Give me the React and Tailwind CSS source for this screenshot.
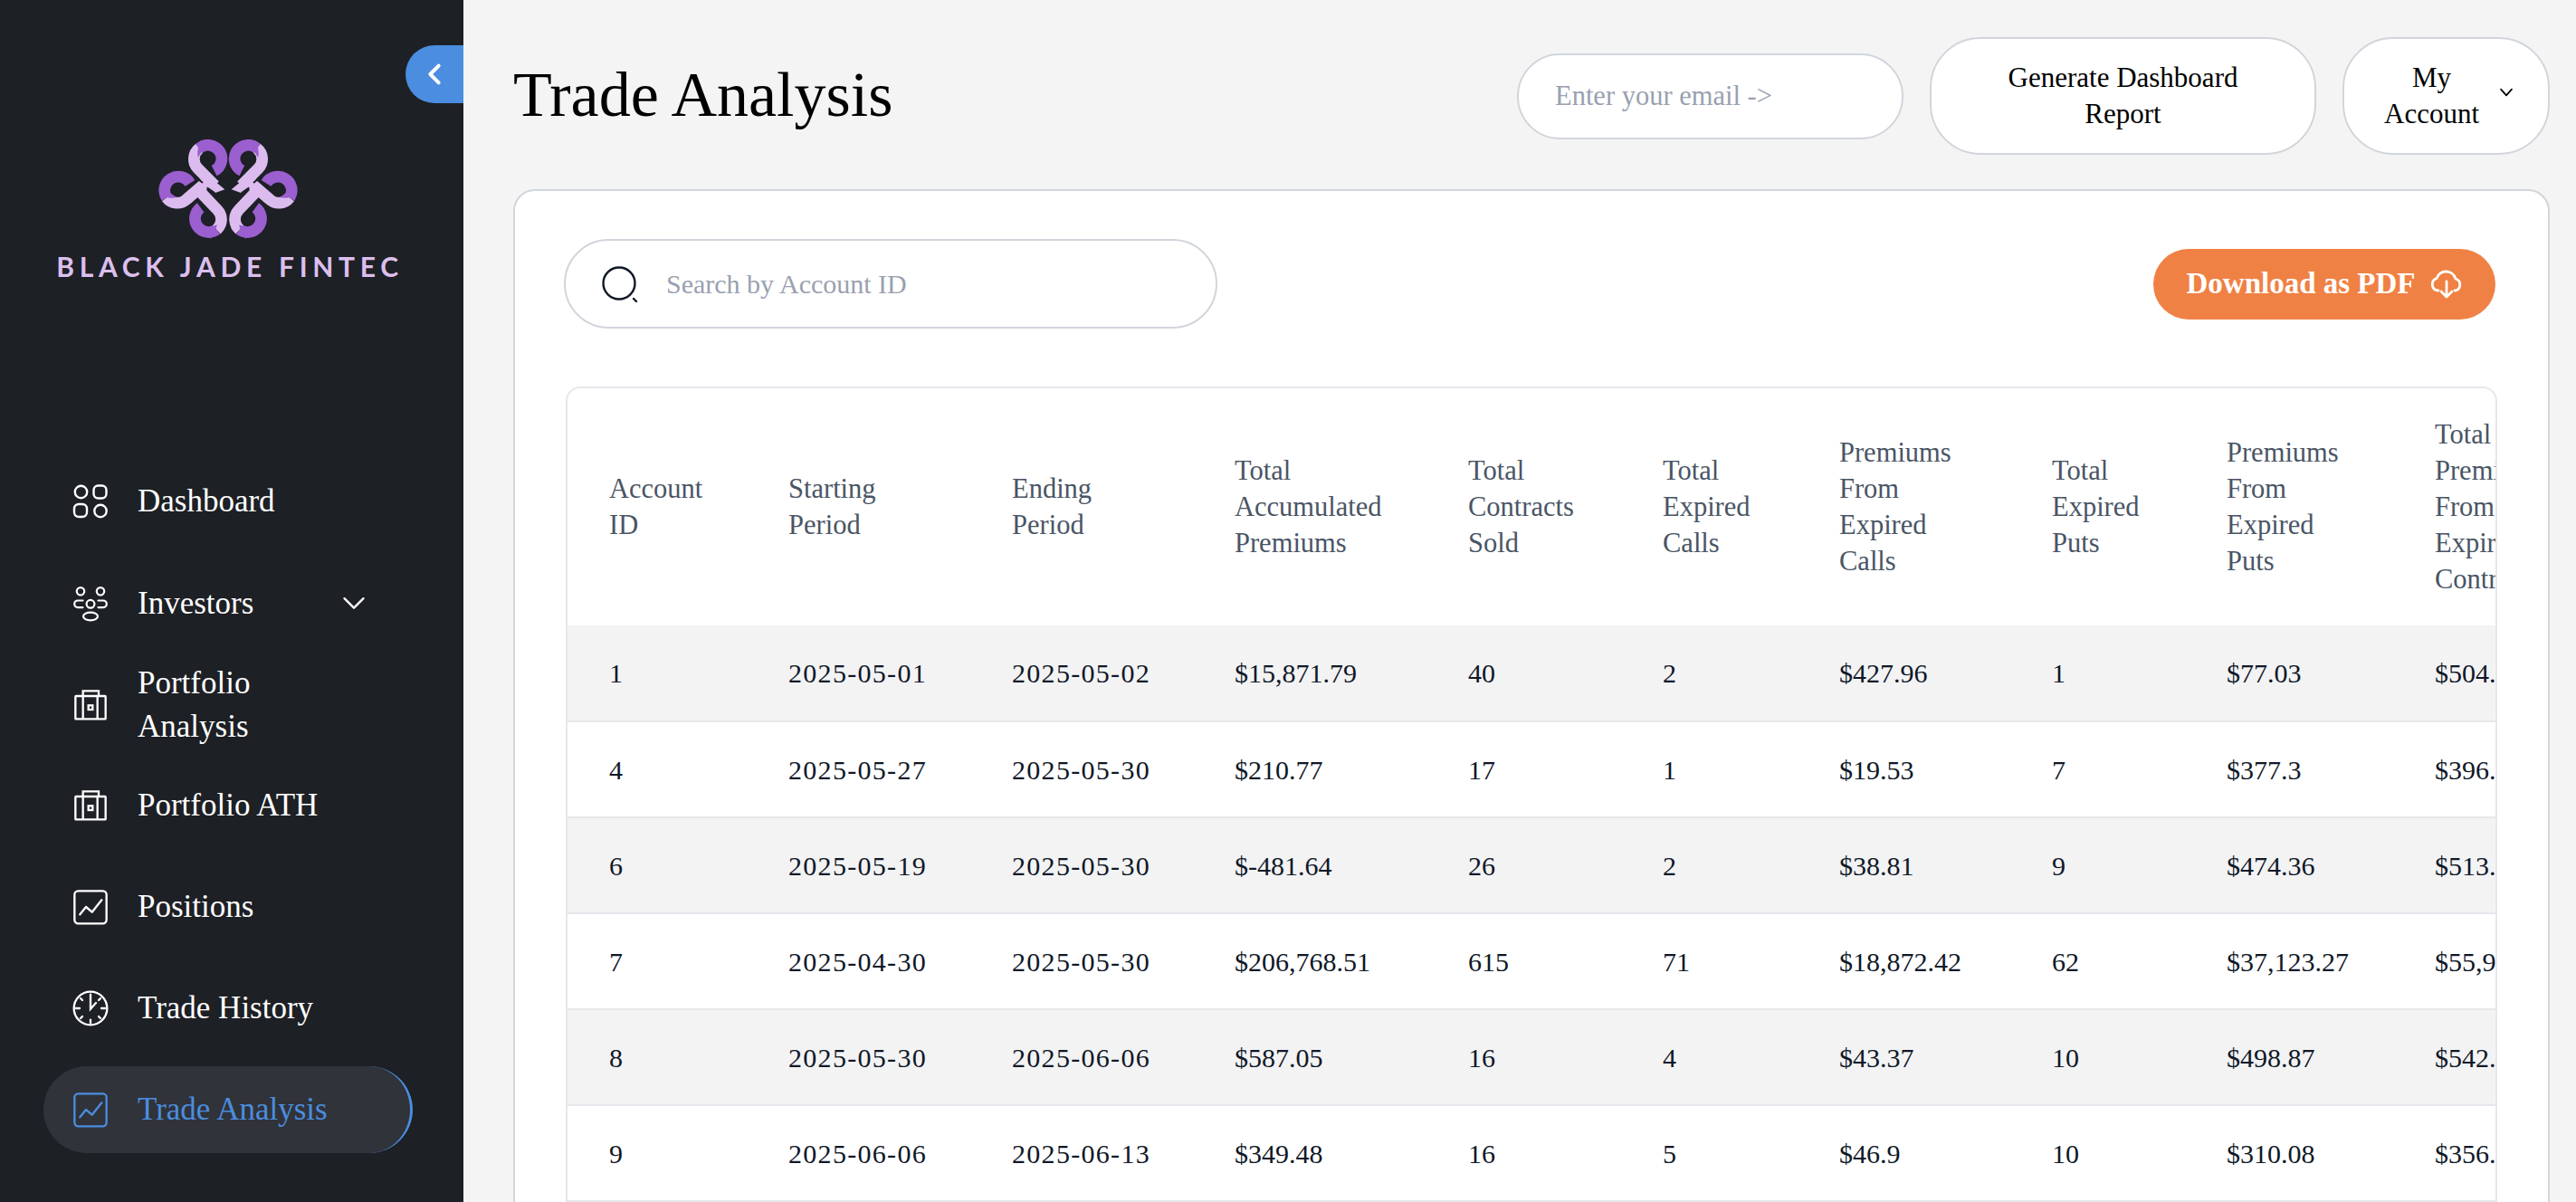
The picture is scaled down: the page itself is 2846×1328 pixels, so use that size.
const serif = { fontFamily: '"Liberation Serif", serif' };

function Logo() {
  const half = (
    <g fill="none">
      <path d="M630 607 A45 45 0 1 0 552 655" stroke="#9b5fd0" strokeWidth="38" />
      <path d="M552 655 A45 45 0 0 0 618 661 L684 604" stroke="#dcbcef" strokeWidth="38" />
      <path d="M526 636 Q545 662 585 655 L565 640 L548 620 Z" fill="#9b5fd0" />
      <path d="M665 688 A45 45 0 1 0 718 761" stroke="#9b5fd0" strokeWidth="38" />
      <path d="M718 761 A45 45 0 0 0 721 696 L665 637" stroke="#dcbcef" strokeWidth="38" />
      <path d="M719 745 Q716 775 698 791 L690 770 L705 750 Z" fill="#9b5fd0" />
      <path d="M710 566 A45 45 0 1 0 660 492" stroke="#9b5fd0" strokeWidth="38" />
      <path d="M660 492 A45 45 0 0 0 656 559 L712 615" stroke="#dcbcef" strokeWidth="38" />
      <path d="M690 462 Q648 475 656 522 L668 505 L682 490 Z" fill="#9b5fd0" />
      <path d="M696 587 L745 628 L712 640 L686 622 Z" fill="#dcbcef" />
      <path d="M660 596 L672 606 M686 622 L712 640" stroke="#1d2025" strokeWidth="6" />
    </g>
  );
  return (
    <svg viewBox="525 462 462 330" className="w-[154px] h-[110px] block">
      {half}
      <g transform="translate(1512 0) scale(-1 1)">{half}</g>
    </svg>
  );
}

const DashIcon = () => (
  <svg viewBox="0 0 40 40" className="w-10 h-10" fill="none" stroke="currentColor" strokeWidth="2.4">
    <circle cx="9.5" cy="9.5" r="6.7" />
    <rect x="23.5" y="2.5" width="14" height="14" rx="5" />
    <rect x="2" y="23" width="14" height="14" rx="5" />
    <circle cx="31" cy="30.5" r="6.7" />
  </svg>
);
const UsersIcon = () => (
  <svg viewBox="0 0 40 40" className="w-10 h-10" fill="none" stroke="currentColor" strokeWidth="2.2" strokeLinecap="round">
    <circle cx="9" cy="6.3" r="4.2" />
    <circle cx="31" cy="6.3" r="4.2" />
    <circle cx="20" cy="20.3" r="4.4" />
    <ellipse cx="20" cy="34" rx="8" ry="4.4" />
    <path d="M11.5 16.5 H6 a3.8 3.8 0 0 0 0 7.6 H11.5" />
    <path d="M28.5 16.5 H34 a3.8 3.8 0 0 1 0 7.6 H28.5" />
  </svg>
);
const CaseIcon = () => (
  <svg viewBox="0 0 120 120" className="w-10 h-10" fill="none" stroke="currentColor" strokeWidth="7">
    <rect x="10" y="30" width="100" height="76" rx="2" />
    <path d="M35 106 V30 M83 106 V30 M35 30 V13 H87 V30" />
    <rect x="53" y="61" width="14" height="14" />
  </svg>
);
const ChartIcon = () => (
  <svg viewBox="0 0 120 120" className="w-10 h-10" fill="none" stroke="currentColor" strokeWidth="7" strokeLinecap="round" strokeLinejoin="round">
    <rect x="7" y="7" width="106" height="108" rx="12" />
    <path d="M25 85 L45 60 L65 77 L97 37" />
  </svg>
);
const ClockIcon = () => (
  <svg viewBox="0 0 120 120" className="w-10 h-10" fill="none" stroke="currentColor" strokeWidth="7" strokeLinecap="round">
    <circle cx="60" cy="60" r="55" />
    <path d="M60 14 V62 L78 42 M60 98 V108 M12 60 H24 M96 60 H108 M27 27 L33 33 M93 27 L87 33 M27 93 L33 87 M93 93 L87 87" />
  </svg>
);

const nav = [
  { label: "Dashboard", icon: DashIcon, cls: "mt-[195px]" },
  { label: "Investors", icon: UsersIcon, cls: "mt-[17px]", chevron: true },
  { label: "Portfolio Analysis", icon: CaseIcon, cls: "mt-[16px]" },
  { label: "Portfolio ATH", icon: CaseIcon, cls: "mt-[15px]" },
  { label: "Positions", icon: ChartIcon, cls: "mt-4" },
  { label: "Trade History", icon: ClockIcon, cls: "mt-4" },
  { label: "Trade Analysis", icon: ChartIcon, cls: "mt-4", active: true },
];

const headers = [
  ["Account", "ID"],
  ["Starting", "Period"],
  ["Ending", "Period"],
  ["Total", "Accumulated", "Premiums"],
  ["Total", "Contracts", "Sold"],
  ["Total", "Expired", "Calls"],
  ["Premiums", "From", "Expired", "Calls"],
  ["Total", "Expired", "Puts"],
  ["Premiums", "From", "Expired", "Puts"],
  ["Total", "Premiums", "From", "Expired", "Contracts"],
];
const rows = [
  ["1", "2025-05-01", "2025-05-02", "$15,871.79", "40", "2", "$427.96", "1", "$77.03", "$504.99"],
  ["4", "2025-05-27", "2025-05-30", "$210.77", "17", "1", "$19.53", "7", "$377.3", "$396.83"],
  ["6", "2025-05-19", "2025-05-30", "$-481.64", "26", "2", "$38.81", "9", "$474.36", "$513.17"],
  ["7", "2025-04-30", "2025-05-30", "$206,768.51", "615", "71", "$18,872.42", "62", "$37,123.27", "$55,995.69"],
  ["8", "2025-05-30", "2025-06-06", "$587.05", "16", "4", "$43.37", "10", "$498.87", "$542.24"],
  ["9", "2025-06-06", "2025-06-13", "$349.48", "16", "5", "$46.9", "10", "$310.08", "$356.98"],
];
const widths = [198, 247, 246, 258, 215, 195, 235, 193, 230, 240];

export default function App() {
  return (
    <div className="flex h-screen overflow-hidden bg-[#f4f4f4]" style={serif}>
      <aside className="relative w-[512px] shrink-0 bg-[#1d2025] text-white">
        <button className="absolute right-0 top-[50px] flex h-16 w-16 items-center justify-center rounded-l-full bg-[#4b8ddf]">
          <svg viewBox="0 0 24 24" className="h-8 w-8" fill="none" stroke="white" strokeWidth="3" strokeLinecap="round" strokeLinejoin="round">
            <path d="M15.5 5 L8.5 12 L15.5 19" />
          </svg>
        </button>
        <div className="flex flex-col items-center pr-2 pt-[154px]">
          <Logo />
          <div className="ml-[4px] mt-[13px] text-[30px] font-bold leading-[34px] tracking-[5.7px] text-[#dcbfee] whitespace-nowrap" style={{ fontFamily: '"Lato", sans-serif' }}>
            BLACK JADE FINTEC
          </div>
        </div>
        <nav className="ml-12 w-[408px] flex flex-col">
          {nav.map((n) => {
            const Icon = n.icon;
            return (
              <a
                key={n.label}
                className={`${n.cls} flex h-24 items-center gap-8 pl-8 text-[35px] leading-[48px] rounded-full ${n.active ? "bg-[#30333a] text-[#4b8ddf] border-r-[3px] border-[#4b8ddf]" : "text-white"}`}
              >
                <span className="shrink-0"><Icon /></span>
                <span className={n.label === "Portfolio Analysis" ? "w-[170px]" : ""}>{n.label}</span>
                {n.chevron && (
                  <svg viewBox="0 0 24 24" className="ml-[65px] h-7 w-7" fill="none" stroke="currentColor" strokeWidth="2" strokeLinecap="round" strokeLinejoin="round">
                    <path d="M3 7 L12 16 L21 7" />
                  </svg>
                )}
              </a>
            );
          })}
        </nav>
      </aside>

      <main className="min-w-0 flex-1 pl-[55px] pr-[29px] pt-[41px]">
        <header className="flex h-[130px] items-center justify-between">
          <h1 className="-mt-[2px] text-[70px] leading-none text-black">Trade Analysis</h1>
          <div className="flex items-center gap-[29px]">
            <input
              placeholder="Enter your email ->"
              className="h-[95px] w-[427px] rounded-full border-2 border-gray-300 bg-white pl-[40px] text-[30.5px] text-black outline-none placeholder:text-gray-400"
            />
            <button className="h-[130px] w-[427px] rounded-[56px] border-2 border-gray-300 bg-white px-10 text-[31px] leading-[40px] text-black">
              Generate Dashboard<br />Report
            </button>
            <button className="flex h-[130px] w-[229px] items-center justify-between rounded-[56px] border-2 border-gray-300 bg-white pl-[44px] pr-[38px] text-[31px] leading-[40px] text-black">
              <span className="text-center">My<br />Account</span>
              <svg viewBox="0 0 24 24" className="-mt-2 h-[16px] w-[16px]" fill="none" stroke="currentColor" strokeWidth="2.6" strokeLinecap="round" strokeLinejoin="round">
                <path d="M3 7 L12 17 L21 7" />
              </svg>
            </button>
          </div>
        </header>

        <section className="mt-[38px] h-[1200px] rounded-[24px] border-2 border-gray-300 bg-white pl-[54px] pr-[56px] pt-[53px]">
          <div className="flex items-center justify-between">
            <div className="flex h-[99px] w-[722px] items-center rounded-full border-2 border-gray-300 pl-[40px]">
              <svg viewBox="0 0 40 40" className="h-10 w-10 shrink-0" fill="none" stroke="#111827" strokeWidth="2.4" strokeLinecap="round">
                <circle cx="19" cy="19" r="17.5" />
                <path d="M35 36 L38 39" />
              </svg>
              <input
                placeholder="Search by Account ID"
                className="ml-[31px] w-[500px] bg-transparent text-[30px] outline-none placeholder:text-gray-400"
              />
            </div>
            <button className="mr-[2px] flex h-[78px] w-[378px] items-center justify-center gap-4 rounded-full bg-[#f08144] text-[33px] font-bold text-white">
              Download as PDF
              <svg viewBox="0 0 36 36" className="h-9 w-9" fill="none" stroke="white" strokeWidth="2.8" strokeLinecap="round" strokeLinejoin="round">
                <path d="M9 25 H8 A7 7 0 0 1 7 11.5 A11 11 0 0 1 28 12 A6.8 6.8 0 0 1 28 25 H27" />
                <path d="M18 15 V32 M12 26 L18 32 L24 26" />
              </svg>
            </button>
          </div>

          <div className="ml-[2px] mt-[64px] h-[1000px] overflow-hidden rounded-t-[16px] border-x-2 border-t-2 border-gray-200">
            <table className="table-fixed border-collapse text-left" style={{ width: widths.reduce((a, b) => a + b, 0) }}>
              <colgroup>
                {widths.map((w, i) => (
                  <col key={i} style={{ width: w }} />
                ))}
              </colgroup>
              <thead>
                <tr>
                  {headers.map((h, i) => (
                    <th key={i} className="h-[262px] pl-[46px] pr-0 align-middle text-[30.5px] font-normal leading-[40px] text-gray-600 whitespace-nowrap">
                      {h.map((l, j) => (
                        <div key={j}>{l}</div>
                      ))}
                    </th>
                  ))}
                </tr>
              </thead>
              <tbody>
                {rows.map((r, i) => (
                  <tr key={i} className={`h-[106px] border-b-2 border-gray-200 ${i % 2 === 0 ? "bg-[#f3f3f4]" : "bg-white"}`}>
                    {r.map((c, j) => (
                      <td key={j} className={`pl-[46px] pr-0 text-[30px] text-gray-900 whitespace-nowrap ${j === 1 || j === 2 ? "tracking-[1.3px]" : ""}`}>
                        {c}
                      </td>
                    ))}
                  </tr>
                ))}
              </tbody>
            </table>
          </div>
        </section>
      </main>
    </div>
  );
}
